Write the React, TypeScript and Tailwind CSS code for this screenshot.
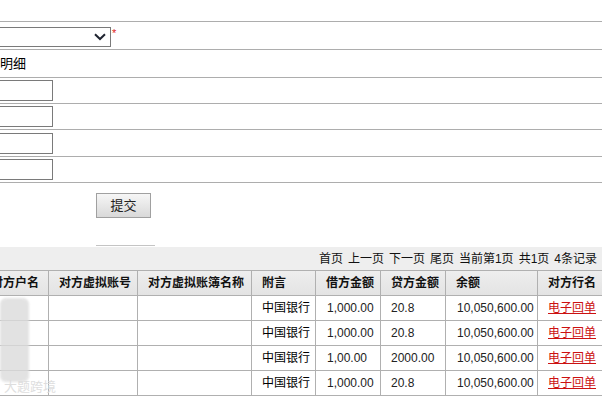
const rows = [
  { debit: "1,000.00", credit: "20.8" },
  { debit: "1,000.00", credit: "20.8" },
  { debit: "1,00.00", credit: "2000.00" },
  { debit: "1,000.00", credit: "20.8" },
];

const headers = [
  "对方户名",
  "对方虚拟账号",
  "对方虚拟账簿名称",
  "附言",
  "借方金额",
  "贷方金额",
  "余额",
  "对方行名",
];

function TextInput() {
  return <div className="-ml-[20px] h-[21px] w-[73px] border border-[#7a7a7a] bg-white" />;
}

export default function App() {
  return (
    <div
      className="relative h-[400px] w-[602px] overflow-hidden bg-white text-black"
      style={{ fontFamily: '"Liberation Sans", "Noto Sans CJK SC", sans-serif' }}
    >
      {/* 查询条件 */}
      <div className="h-[21px]" />
      <div className="border-b border-[#adadad]">
        <div className="flex h-[28px] items-start border-t border-[#adadad] pt-[5px]">
          <div className="-ml-[40px] flex h-[20px] w-[151px] items-center justify-end border border-[#7a7a7a] pr-[4px]">
            <svg width="12" height="8" viewBox="0 0 12 8">
              <path d="M1 1.2 L6 6 L11 1.2" fill="none" stroke="#1f2430" strokeWidth="2" />
            </svg>
          </div>
          <span className="ml-[1px] mt-[1px] text-[11px] leading-none text-[#e01818]">*</span>
        </div>
        <div className="flex h-[28px] items-center border-t border-[#adadad]">
          <span className="text-[13px]">明细</span>
        </div>
        <div className="flex h-[26px] items-center border-t border-[#adadad]">
          <TextInput />
        </div>
        <div className="flex h-[26px] items-center border-t border-[#adadad]">
          <TextInput />
        </div>
        <div className="flex h-[27px] items-center border-t border-[#adadad]">
          <TextInput />
        </div>
        <div className="flex h-[26px] items-center border-t border-[#adadad]">
          <TextInput />
        </div>
      </div>

      {/* 提交 */}
      <div className="h-[62px] pt-[10px]">
        <button className="ml-[96px] h-[25px] w-[55px] border border-[#a0a0a0] bg-gradient-to-b from-[#f6f6f6] to-[#d9d9d9] text-[13px] text-[#222]">
          提交
        </button>
      </div>
      <div className="ml-[96px] h-px w-[59px] bg-[#c4c4c4]" />
      <div className="h-px" />

      {/* 分页 */}
      <div className="flex h-[23px] items-center justify-end gap-[5px] bg-[#eeeeee] pr-[5px] text-[12px] text-[#111]">
        <span>首页</span>
        <span>上一页</span>
        <span>下一页</span>
        <span>尾页</span>
        <span>当前第1页</span>
        <span>共1页</span>
        <span>4条记录</span>
      </div>

      {/* 明细表 */}
      <table className="-ml-[20px] w-[637px] table-fixed border-collapse text-[12px]">
        <colgroup>
          <col className="w-[68px]" />
          <col className="w-[89px]" />
          <col className="w-[114px]" />
          <col className="w-[64px]" />
          <col className="w-[65px]" />
          <col className="w-[65px]" />
          <col className="w-[92px]" />
          <col className="w-[80px]" />
        </colgroup>
        <thead>
          <tr className="h-[25px] bg-gradient-to-b from-[#eeeeee] to-[#e3e3e3]">
            {headers.map((h) => (
              <th
                key={h}
                className="whitespace-nowrap border border-[#b0b0b0] pl-[10px] text-left font-bold text-[#111]"
              >
                {h}
              </th>
            ))}
          </tr>
        </thead>
        <tbody>
          {rows.map((r, i) => (
            <tr key={i} className="h-[25px]">
              <td className="border border-[#b0b0b0]" />
              <td className="border border-[#b0b0b0]" />
              <td className="border border-[#b0b0b0]" />
              <td className="border border-[#b0b0b0] pl-[10px]">中国银行</td>
              <td className="border border-[#b0b0b0] pl-[11px] text-[#222]">{r.debit}</td>
              <td className="border border-[#b0b0b0] pl-[10px] text-[#222]">{r.credit}</td>
              <td className="border border-[#b0b0b0] pl-[11px] text-[#222]">10,050,600.00</td>
              <td className="border border-[#b0b0b0] pl-[10px]">
                <a className="text-[#cc1111] underline">电子回单</a>
              </td>
            </tr>
          ))}
        </tbody>
      </table>

      {/* 打码区域 */}
      <div className="absolute left-0 top-[298px] h-[84px] w-[29px] rounded-[6px] bg-[#dcdcdc] opacity-80 blur-[1px]" />
      <div className="absolute left-[4px] top-[377px] text-[13px] text-[#dedede]">大题跨境</div>
    </div>
  );
}
